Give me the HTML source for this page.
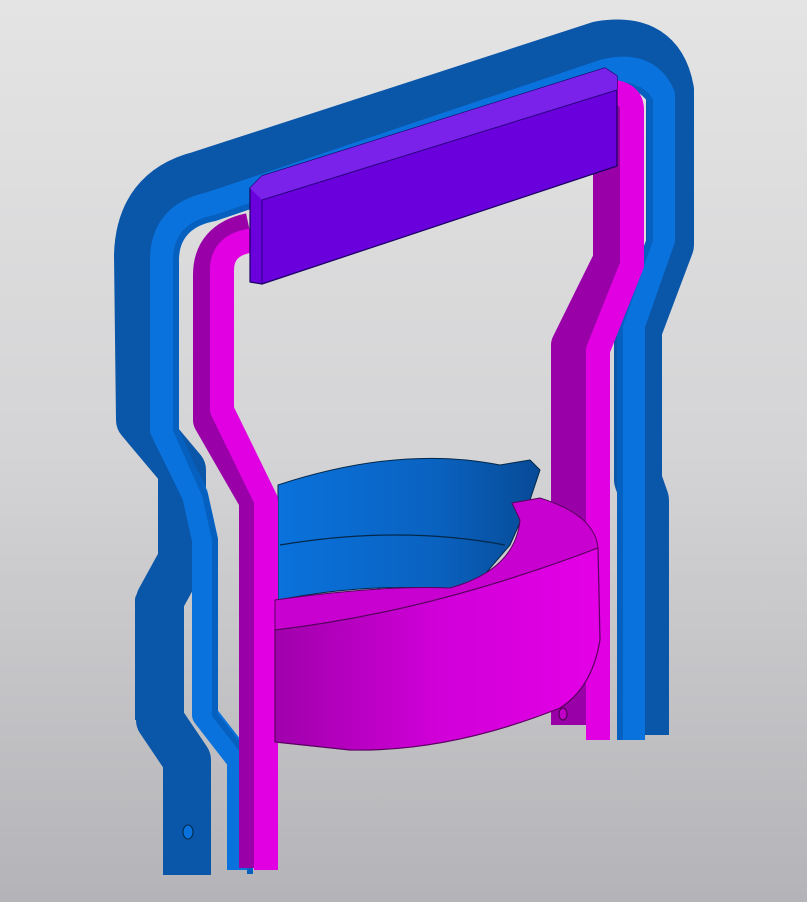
<!DOCTYPE html>
<html><head><style>
html,body{margin:0;padding:0;}
body{width:807px;height:902px;overflow:hidden;background:linear-gradient(#e4e4e4,#d4d4d6 50%,#b4b4b8);}
svg{display:block}
</style></head><body>
<svg width="807" height="902" viewBox="0 0 807 902" xmlns="http://www.w3.org/2000/svg" stroke-linejoin="round">
<defs>
<linearGradient id="rb" x1="0" x2="1"><stop offset="0" stop-color="#0a72dc"/><stop offset="0.6" stop-color="#0a62c0"/><stop offset="1" stop-color="#074a96"/></linearGradient>
<linearGradient id="rm" x1="0" x2="1"><stop offset="0" stop-color="#a000ac"/><stop offset="0.5" stop-color="#d000d8"/><stop offset="1" stop-color="#e400e6"/></linearGradient>
</defs>
<!-- back blue ring -->
<path d="M278,485 Q400,445 500,465 L530,460 L540,470 L530,500 L510,545 Q480,580 470,592 Q380,580 278,600 Z" fill="url(#rb)" stroke="#02284a" stroke-width="1"/>
<path d="M280,545 Q400,525 505,545" fill="none" stroke="#02284a" stroke-width="1.2"/>
<path d="M285,600 Q380,582 470,590 Q380,612 285,606 Z" fill="#c8c8cc"/>
<!-- blue frame dark -->
<path d="M187,875 L187,760 L160,720 L160,600 L182,560 L182,470 L140,420 L138,255 Q140,190 200,175 L600,45 Q660,35 670,90 L670,245 L638,330 L638,480 L645,500 L645,735" fill="none" stroke="#0a56a8" stroke-width="48"/>
<path d="M145,720 L145,600 L165,580" fill="none" stroke="#0a56a8" stroke-width="20"/>
<path d="M240,870 L240,760 L205,715 L205,540 L195,495 L163,430 L163,260 Q163,215 210,205 L605,72 Q648,62 662,95 L662,240 L632,325 L632,740" fill="none" stroke="#0a72dc" stroke-width="26"/>
<path d="M250,874 L250,760 L215,715 L215,540 L205,495 L176,430 L176,260 Q176,225 215,218 L605,86 Q636,80 650,100 L650,240 L620,325 L620,740" fill="none" stroke="#0560c0" stroke-width="6"/>
<!-- magenta frame -->
<path d="M258,868 L258,500 L212,420 L212,275 Q212,240 250,232 M570,725 L570,345 L612,260 L612,100" fill="none" stroke="#9a00a8" stroke-width="38"/>
<path d="M266,870 L266,500 L222,410 L222,270 Q222,242 258,240 M598,740 L598,350 L632,265 L632,110 Q632,95 615,92" fill="none" stroke="#e000e2" stroke-width="24"/>
<!-- purple bar -->
<path d="M250,188 L262,176 L605,68 L617,76 L617,166 L262,284 L250,282 Z" fill="#6a00dc" stroke="#1a0060" stroke-width="1.2"/>
<path d="M250,188 L262,176 L605,68 L617,76 L617,90 L262,200 Z" fill="#7a22ea"/>
<path d="M262,200 L262,284 M262,200 L617,90" stroke="#2a0080" stroke-width="1" fill="none"/>
<!-- magenta ring -->
<path d="M275,600 Q380,585 450,588 Q515,570 520,520 L512,503 L540,498 Q595,515 598,548 Q430,612 275,630 Z" fill="#c800d0" stroke="#5a0060" stroke-width="1"/>
<path d="M275,630 Q430,612 598,548 L600,640 Q592,688 560,708 Q450,752 350,750 L275,742 Z" fill="url(#rm)" stroke="#5a0060" stroke-width="1.2"/>
<ellipse cx="188" cy="832" rx="5" ry="7" fill="#0a72dc" stroke="#02284a"/>
<ellipse cx="563" cy="714" rx="4" ry="6" fill="#c000c8" stroke="#400040"/>
</svg>
</body></html>
